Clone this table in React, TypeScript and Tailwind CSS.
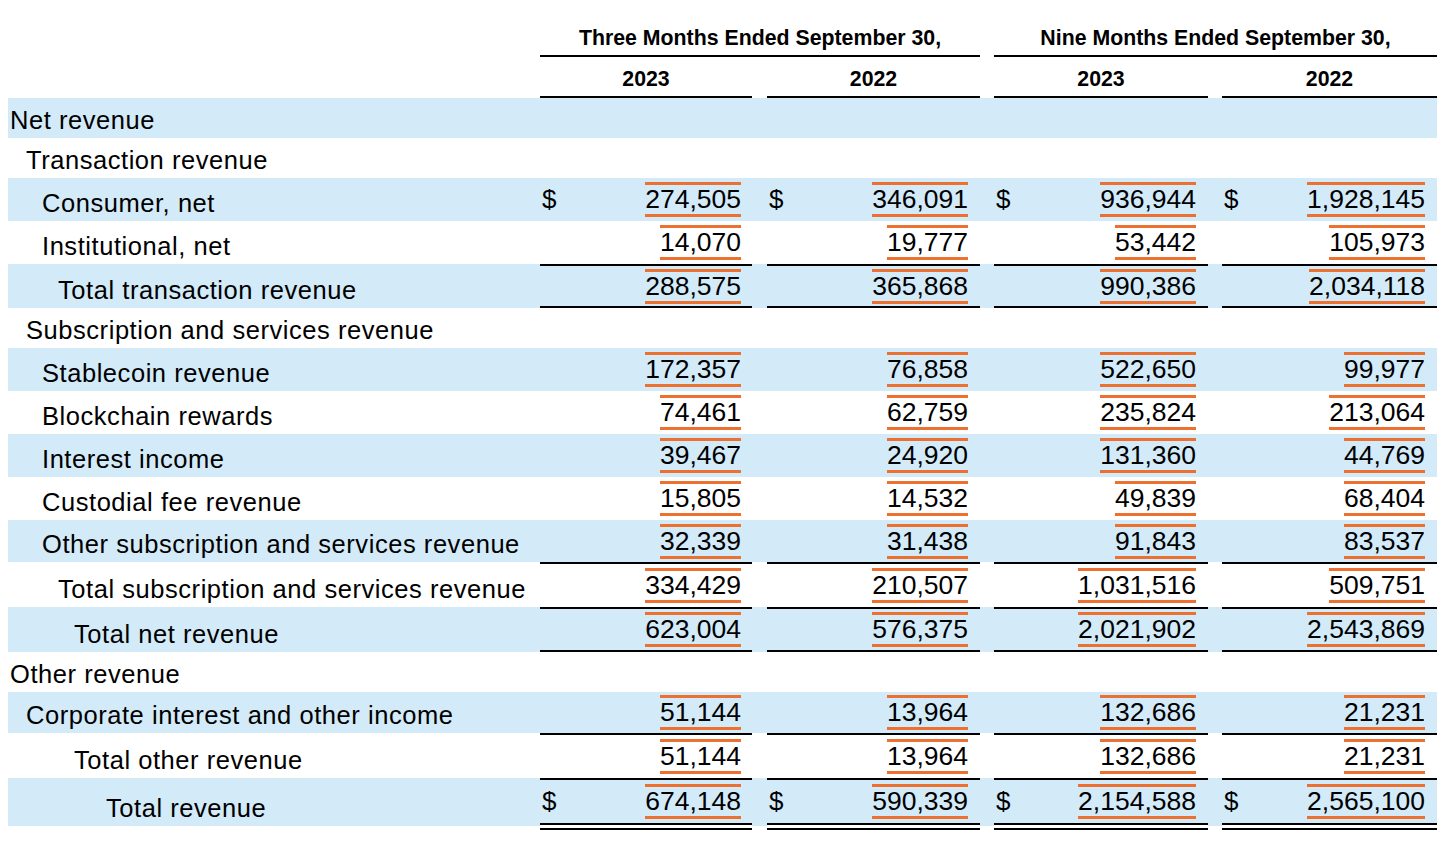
import React from "react";
import clsx from "clsx";

type Row = {
  label: string;
  indent: string;
  blue: boolean;
  h: string;
  vals?: string[];
  dollar?: boolean;
  bt?: boolean;
  bb?: "single" | "double";
};

const GRID =
  "grid grid-cols-[532px_212px_15px_213px_14px_214px_14px_215px]";

const rows: Row[] = [
  { label: "Net revenue", indent: "pl-[2px]", blue: true, h: "h-[40px]" },
  { label: "Transaction revenue", indent: "pl-[18px]", blue: false, h: "h-[40px]" },
  {
    label: "Consumer, net",
    indent: "pl-[34px]",
    blue: true,
    h: "h-[43px]",
    vals: ["274,505", "346,091", "936,944", "1,928,145"],
    dollar: true,
  },
  {
    label: "Institutional, net",
    indent: "pl-[34px]",
    blue: false,
    h: "h-[43px]",
    vals: ["14,070", "19,777", "53,442", "105,973"],
  },
  {
    label: "Total transaction revenue",
    indent: "pl-[50px]",
    blue: true,
    h: "h-[44px]",
    vals: ["288,575", "365,868", "990,386", "2,034,118"],
    bt: true,
    bb: "single",
  },
  { label: "Subscription and services revenue", indent: "pl-[18px]", blue: false, h: "h-[40px]" },
  {
    label: "Stablecoin revenue",
    indent: "pl-[34px]",
    blue: true,
    h: "h-[43px]",
    vals: ["172,357", "76,858", "522,650", "99,977"],
  },
  {
    label: "Blockchain rewards",
    indent: "pl-[34px]",
    blue: false,
    h: "h-[43px]",
    vals: ["74,461", "62,759", "235,824", "213,064"],
  },
  {
    label: "Interest income",
    indent: "pl-[34px]",
    blue: true,
    h: "h-[43px]",
    vals: ["39,467", "24,920", "131,360", "44,769"],
  },
  {
    label: "Custodial fee revenue",
    indent: "pl-[34px]",
    blue: false,
    h: "h-[43px]",
    vals: ["15,805", "14,532", "49,839", "68,404"],
  },
  {
    label: "Other subscription and services revenue",
    indent: "pl-[34px]",
    blue: true,
    h: "h-[42px]",
    vals: ["32,339", "31,438", "91,843", "83,537"],
  },
  {
    label: "Total subscription and services revenue",
    indent: "pl-[50px]",
    blue: false,
    h: "h-[45px]",
    vals: ["334,429", "210,507", "1,031,516", "509,751"],
    bt: true,
  },
  {
    label: "Total net revenue",
    indent: "pl-[66px]",
    blue: true,
    h: "h-[45px]",
    vals: ["623,004", "576,375", "2,021,902", "2,543,869"],
    bt: true,
    bb: "single",
  },
  { label: "Other revenue", indent: "pl-[2px]", blue: false, h: "h-[40px]" },
  {
    label: "Corporate interest and other income",
    indent: "pl-[18px]",
    blue: true,
    h: "h-[41px]",
    vals: ["51,144", "13,964", "132,686", "21,231"],
  },
  {
    label: "Total other revenue",
    indent: "pl-[66px]",
    blue: false,
    h: "h-[45px]",
    vals: ["51,144", "13,964", "132,686", "21,231"],
    bt: true,
  },
  {
    label: "Total revenue",
    indent: "pl-[98px]",
    blue: true,
    h: "h-[52px]",
    vals: ["674,148", "590,339", "2,154,588", "2,565,100"],
    dollar: true,
    bt: true,
    bb: "double",
  },
];

const PR = ["pr-[11px]", "pr-[12px]", "pr-[12px]", "pr-[12px]"];

function NumCell({
  v,
  dollar,
  row,
  idx,
}: {
  v: string;
  dollar?: boolean;
  row: Row;
  idx: number;
}) {
  return (
    <div
      className={clsx(
        "flex items-center justify-between pl-[2px] bg-clip-padding",
        PR[idx],
        row.blue && "bg-[#d3eaf9]",
        row.bt && "border-t-2 border-t-black",
        row.bb === "single" && "border-b-2 border-b-black",
        row.bb === "double" && "border-b-[7px] border-double border-b-black"
      )}
    >
      <span className="text-[26px] leading-[29px]">{dollar ? "$" : ""}</span>
      <span className="text-[26.5px] leading-[29px] border-y-[3px] border-[#ec7131]">
        {v}
      </span>
    </div>
  );
}

function Filler({ row }: { row: Row }) {
  return (
    <div
      className={clsx(
        "bg-clip-padding",
        row.blue && "bg-[#d3eaf9]",
        row.bb === "double" && "border-b-[4px] border-b-transparent"
      )}
    />
  );
}

function BodyRow({ row }: { row: Row }) {
  return (
    <div className={clsx(GRID, row.h)}>
      <div
        className={clsx(
          "flex items-end pb-[3px] whitespace-nowrap text-[25.5px] leading-[30px] tracking-[0.55px] bg-clip-padding",
          row.indent,
          row.blue && "bg-[#d3eaf9]",
          row.bb === "double" && "border-b-[4px] border-b-transparent"
        )}
      >
        {row.label}
      </div>
      {row.vals ? (
        <>
          <NumCell v={row.vals[0]} dollar={row.dollar} row={row} idx={0} />
          <Filler row={row} />
          <NumCell v={row.vals[1]} dollar={row.dollar} row={row} idx={1} />
          <Filler row={row} />
          <NumCell v={row.vals[2]} dollar={row.dollar} row={row} idx={2} />
          <Filler row={row} />
          <NumCell v={row.vals[3]} dollar={row.dollar} row={row} idx={3} />
        </>
      ) : (
        <div className={clsx("col-span-7", row.blue && "bg-[#d3eaf9]")} />
      )}
    </div>
  );
}

const HEAD_YEAR =
  "flex items-end justify-center border-b-2 border-black pb-[5px] text-[21.3px] font-bold leading-[24px]";
const HEAD_SPAN =
  "col-span-3 flex items-end justify-center border-b-2 border-black pb-[5px] text-[21.3px] font-bold leading-[24px]";

export default function App() {
  return (
    <div className="min-h-screen w-full bg-white text-black font-['Liberation_Sans',Arial,sans-serif]">
      <div className="ml-[8px] w-[1429px]">
        <div className={clsx(GRID, "h-[57px]")}>
          <div />
          <div className={HEAD_SPAN}>Three Months Ended September 30,</div>
          <div />
          <div className={HEAD_SPAN}>Nine Months Ended September 30,</div>
        </div>
        <div className={clsx(GRID, "h-[41px]")}>
          <div />
          <div className={HEAD_YEAR}>2023</div>
          <div />
          <div className={HEAD_YEAR}>2022</div>
          <div />
          <div className={HEAD_YEAR}>2023</div>
          <div />
          <div className={HEAD_YEAR}>2022</div>
        </div>
        {rows.map((r, i) => (
          <BodyRow key={i} row={r} />
        ))}
      </div>
    </div>
  );
}
